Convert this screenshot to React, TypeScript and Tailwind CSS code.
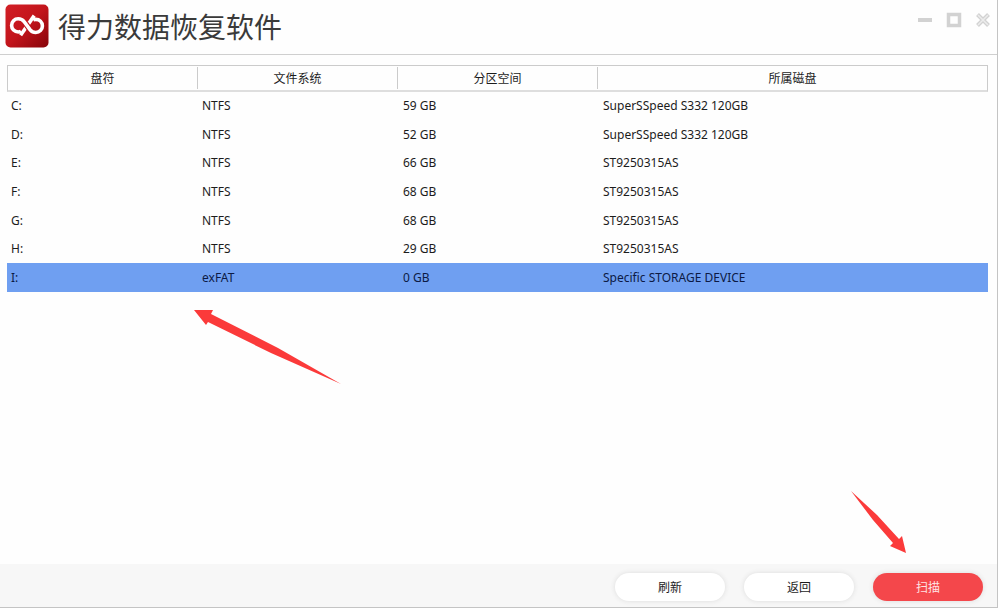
import React from "react";

type Volume = { drive: string; fs: string; size: string; disk: string };

const columns = ["盘符", "文件系统", "分区空间", "所属磁盘"];

const volumes: Volume[] = [
  { drive: "C:", fs: "NTFS", size: "59 GB", disk: "SuperSSpeed S332 120GB" },
  { drive: "D:", fs: "NTFS", size: "52 GB", disk: "SuperSSpeed S332 120GB" },
  { drive: "E:", fs: "NTFS", size: "66 GB", disk: "ST9250315AS" },
  { drive: "F:", fs: "NTFS", size: "68 GB", disk: "ST9250315AS" },
  { drive: "G:", fs: "NTFS", size: "68 GB", disk: "ST9250315AS" },
  { drive: "H:", fs: "NTFS", size: "29 GB", disk: "ST9250315AS" },
  { drive: "I:", fs: "exFAT", size: "0 GB", disk: "Specific STORAGE DEVICE" },
];

function Logo() {
  return (
    <svg viewBox="0 0 44 44" className="size-11 shrink-0" aria-hidden="true">
      <defs>
        <linearGradient id="logo-bg" x1="0" y1="0" x2="1" y2="1">
          <stop offset="0" stopColor="#d21f26" />
          <stop offset="0.5" stopColor="#c2141b" />
          <stop offset="1" stopColor="#86040a" />
        </linearGradient>
      </defs>
      <rect x="0.5" y="0.5" width="43" height="43" rx="5" fill="url(#logo-bg)" />
      <g fill="none" stroke="#fff" strokeWidth="3.6">
        <path d="M15.600 31.200L29.200 11.600" />
        <path d="M20.600 19.400L24.400 24.800" stroke="#bd1219" strokeWidth="5.8" />
        <path d="M16 27.300C15.200 27.800 14.200 28 13.200 28C9.500 28 6.600 25.100 6.600 21.400C6.600 17.700 9.500 14.800 13.200 14.800C15.800 14.800 17.800 15.900 19.200 17.800L25.200 25.900C26.500 27.500 28.500 28.500 30.800 28.500C34.500 28.500 37.400 25.600 37.400 21.900C37.400 18.200 34.500 15.400 30.800 15.400C29.800 15.400 29 15.600 28.200 16" />
      </g>
    </svg>
  );
}

function TitleBar() {
  return (
    <header className="flex h-[55px] items-start justify-between border-b border-[#cfcfcf] pl-[5px] pr-1.5">
      <div className="flex items-start gap-[9px] pt-1">
        <Logo />
        <h1 className="text-[28px] leading-[46px] text-[#3a3a3a]">得力数据恢复软件</h1>
      </div>
      <div className="flex gap-[13px] pt-3 text-[#d2d2d2]">
        <button type="button" aria-label="最小化" className="size-4">
          <svg viewBox="0 0 16 16" className="size-4">
            <path d="M1 8H15" stroke="currentColor" strokeWidth="4" />
          </svg>
        </button>
        <button type="button" aria-label="最大化" className="size-4">
          <svg viewBox="0 0 16 16" className="size-4">
            <rect x="2.500" y="2.500" width="11" height="11" fill="none" stroke="currentColor" strokeWidth="3.500" />
          </svg>
        </button>
        <button type="button" aria-label="关闭" className="size-4">
          <svg viewBox="0 0 16 16" className="size-4">
            <path d="M2.500 2.500L13.500 13.500M13.500 2.500L2.500 13.500" stroke="currentColor" strokeWidth="4" />
            <path d="M3 3L13 13M13 3L3 13" stroke="#ececec" strokeWidth="1.500" />
          </svg>
        </button>
      </div>
    </header>
  );
}

function VolumeTable() {
  return (
    <table className="h-[227px] w-full table-fixed border-separate border-spacing-0 text-xs text-[#1c1c1c]">
      <colgroup>
        <col className="w-[191px]" />
        <col className="w-[200px]" />
        <col className="w-[200px]" />
        <col />
      </colgroup>
      <thead>
        <tr className="h-[27px]">
          {columns.map((name) => (
            <th
              key={name}
              scope="col"
              className="h-[27px] border-y border-b-2 border-t-[#cbcbcb] border-b-[#dedede] p-0 font-normal first:border-l first:border-l-[#cbcbcb] last:border-r last:border-r-[#cbcbcb]"
            >
              <div className="flex h-[22px] items-center justify-center border-r border-[#cbcbcb] pt-0.5 in-[th:last-child]:border-r-0">
                {name}
              </div>
            </th>
          ))}
        </tr>
      </thead>
      <tbody>
        {volumes.map((v) => {
          const selected = v.drive === "I:";
          return (
            <tr
              key={v.drive}
              aria-selected={selected}
              className={selected ? "bg-[#6f9ff1] text-[#0c1a44]" : ""}
            >
              <td className="py-0 pl-1">{v.drive}</td>
              <td className="py-0 pl-1">{v.fs}</td>
              <td className="py-0 pl-[5px]">{v.size}</td>
              <td className="py-0 pl-[5px]">{v.disk}</td>
            </tr>
          );
        })}
      </tbody>
    </table>
  );
}

export default function App() {
  return (
    <div className="flex min-h-screen bg-white pr-[9px] pb-1.5 font-['Noto_Sans','Noto_Sans_CJK_SC',sans-serif]">
      <div className="relative flex grow flex-col border-r border-b border-[#c4c4c4] bg-[#fefefe]">
        <TitleBar />
        <main className="grow pt-2.5 pr-[9px] pl-[7px]">
          <VolumeTable />
        </main>
        <footer className="flex h-[43px] items-center justify-end gap-[19px] bg-[#f7f7f7] pt-0.5 pr-3.5 text-xs text-[#1c1c1c]">
          <button type="button" className="h-7 w-[110px] rounded-full bg-white pt-0.5 shadow-[0_0_5px_#dcdcdc]">
            刷新
          </button>
          <button type="button" className="h-7 w-[110px] rounded-full bg-white pt-0.5 shadow-[0_0_5px_#dcdcdc]">
            返回
          </button>
          <button type="button" className="h-7 w-[110px] rounded-full bg-[#f4474b] pt-0.5 text-[#ffe3e3] shadow-[0_0_5px_#dcdcdc]">
            扫描
          </button>
        </footer>
        <svg
          viewBox="0 0 148 75"
          className="pointer-events-none absolute top-[309px] left-[194px] h-[75px] w-[148px]"
          aria-hidden="true"
        >
          <path d="M0 1L19 1L17 5L84 39L147 75L77 44L14 13L12 16Z" fill="#fb3a3a" />
        </svg>
        <svg
          viewBox="0 0 56 64"
          className="pointer-events-none absolute right-[90px] bottom-[53px] h-16 w-14"
          aria-hidden="true"
        >
          <path d="M0 1L26 25L48 49L51 46L55 63L39 56L42 53L22 30Z" fill="#fb3a3a" />
        </svg>
      </div>
    </div>
  );
}
